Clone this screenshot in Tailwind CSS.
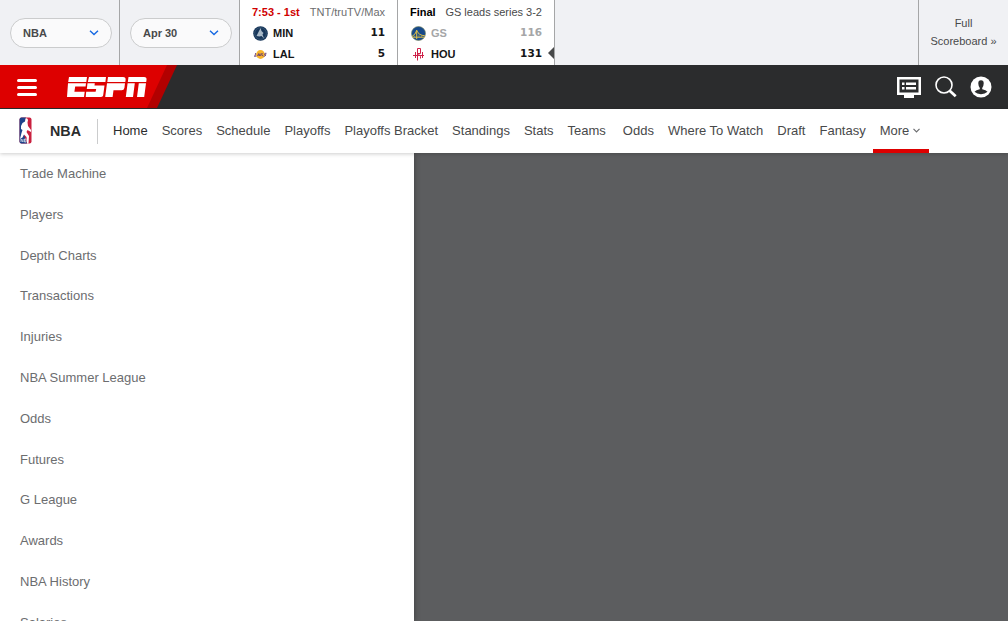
<!DOCTYPE html>
<html lang="en"><head><meta charset="utf-8"><title>NBA on ESPN</title>
<script src="https://cdn.jsdelivr.net/npm/@tailwindcss/browser@4"></script></head>
<body class="w-[1008px] h-[621px] overflow-hidden bg-[#5c5d5f] font-['Liberation_Sans',Arial,sans-serif] text-[13px] flex flex-col">
<section class="h-[65px] shrink-0 flex bg-[#f0f1f4] text-[11px]">
  <div class="w-[120px] border-r border-[#a5a6a7] pl-[10px] pt-[18px]">
    <button class="w-[102px] h-[30px] rounded-full border border-[#cbcccd] bg-[#fafafb] flex items-center justify-between pl-3 pr-3 font-bold text-[#48494a]">NBA<svg class="-mt-px" width="10" height="6" viewBox="0 0 10 6" fill="none" stroke="#1769e2" stroke-width="1.4"><path d="M1 .8 5 4.6 9 .8"/></svg></button>
  </div>
  <div class="w-[120px] border-r border-[#a5a6a7] pl-[10px] pt-[18px]">
    <button class="w-[102px] h-[30px] rounded-full border border-[#cbcccd] bg-[#fafafb] flex items-center justify-between pl-3 pr-3 font-bold text-[#48494a]">Apr 30<svg class="-mt-px" width="10" height="6" viewBox="0 0 10 6" fill="none" stroke="#1769e2" stroke-width="1.4"><path d="M1 .8 5 4.6 9 .8"/></svg></button>
  </div>
  <div class="w-[158px] bg-white border-r border-[#a5a6a7] pl-3 pr-3 pt-[2px]">
    <div class="h-[21px] flex items-center justify-between"><b class="text-[#d00000]">7:53 - 1st</b><span class="text-[#6c6d6f]">TNT/truTV/Max</span></div>
    <div class="h-[21px] flex items-center font-bold text-[#151617]">
      <svg class="ml-px mr-[5px]" width="15" height="15" viewBox="0 0 15 15"><circle cx="7.500" cy="7.500" r="7.300" fill="#17365a"/><circle cx="7.500" cy="7.500" r="5.800" fill="none" stroke="#466680" stroke-width=".6"/><path d="M3.500 10 5.500 6 7.600 2 8.500 5l2 2-1 1.500 1.500 4-2.500-2.500-2 .5z" fill="#a9bac8"/></svg>MIN<span class="ml-auto pb-[2px] text-[10.500px] font-['DejaVu_Sans',sans-serif]">11</span></div>
    <div class="h-[21px] flex items-center font-bold text-[#151617]">
      <svg class="ml-px mr-[5px]" width="15" height="15" viewBox="0 0 15 15"><circle cx="7.500" cy="7.500" r="4.400" fill="#f7b52b"/><path d="M1 9.200h2.500M2.700 6 2 9M4.500 9l1.300-2.500L6.600 9M5 8h2M8.300 6 7.500 9M10.200 6.300 8.500 7.700 10 9M13.500 6.300H12l-.5 1.200 1.500.3-1 1.300h-1.500" stroke="#673c75" fill="none" stroke-width=".9"/></svg>LAL<span class="ml-auto pb-[2px] text-[10.500px] font-['DejaVu_Sans',sans-serif]">5</span></div>
  </div>
  <div class="relative w-[157px] bg-white border-r border-[#a5a6a7] pl-3 pr-3 pt-[2px]">
    <div class="h-[21px] flex items-center justify-between"><b class="text-black">Final</b><span class="text-[#48494a]">GS leads series 3-2</span></div>
    <div class="h-[21px] flex items-center font-bold text-[#a5a6a7]">
      <svg class="ml-px mr-[5px]" width="15" height="15" viewBox="0 0 15 15"><circle cx="7.500" cy="7.500" r="7" fill="#174a8b" stroke="#78875b" stroke-width=".6"/><path d="M1 10.500Q4.500 8.500 5.700 4.500 7.800 9.500 13.800 9.700M1.500 11.200h12M5.700 4v9" stroke="#dfbf47" stroke-width="1" fill="none"/><path d="M3.500 9.500v1.500M8 8.500v2.500M10.500 9.500v1.500" stroke="#b9a94d" stroke-width=".6"/></svg>GS<span class="ml-auto pb-[2px] text-[10.500px] font-['DejaVu_Sans',sans-serif]">116</span></div>
    <div class="h-[21px] flex items-center font-bold text-[#151617]">
      <svg class="ml-px mr-[5px] -mt-px" width="15" height="15" viewBox="0 0 15 15" fill="none" stroke="#ce2148"><path d="M6.500 13.500v-12h3v5h-2.500l2.500 3v2M4.500 5v6M2 8.500h11M11.500 5v6" stroke-width="1"/></svg>HOU<span class="ml-auto pb-[2px] text-[10.500px] font-['DejaVu_Sans',sans-serif]">131</span></div>
    <svg class="absolute right-0 top-[47px]" width="6" height="12" viewBox="0 0 6 12"><path d="M6 0 0 6l6 6z" fill="#48494a"/></svg>
  </div>
  <div class="ml-auto w-[90px] border-l border-[#a5a6a7] pt-[14px] text-center leading-[18px] text-[#48494a]">Full<br>Scoreboard »</div>
</section>
<header class="h-11 shrink-0 bg-[#2b2c2d] flex items-start">
  <div class="relative w-[180px] h-[43px] flex items-center">
    <svg class="absolute inset-0" width="180" height="43" viewBox="0 0 180 43"><path d="M0 0h177l-20 43H0z" fill="#b20000"/><path d="M0 0h167l-20 43H0z" fill="#d00"/></svg>
    <svg class="absolute left-[17px] top-[14px]" width="20" height="17" viewBox="0 0 20 17" stroke="#fff" stroke-width="3" stroke-linecap="round"><path d="M1.500 1.500h17M1.500 8.500h17M1.500 15.500h17"/></svg>
    <svg class="absolute left-[67px] top-[12px]" width="80" height="20" viewBox="0 0 80 20" fill="#fff"><path d="M2 0h18l-.7 5H1.200zM1 6.300h18l-.4 3.200H8.200l-.8 5.300h10.300L17 20H0zM22 0h17l-.6 5H20.800zM20.500 6.300h7.300l-.3 2.200h10l-1.300 9.700Q36 20 34 20H18.700l.5-5.200h9.400l.6-2.800h-9.400zM41 0h15q3 0 2.600 3l-.3 2H40.300zM40 6.300h18l-.6 4.700q-.4 2.300-2.800 2.300h-8.100l-.9 6.700h-7.400zM61.500 0H77q3 0 2.500 3l-.3 2H60.800zM60.600 6.300h7.200L66 20h-7.200zM71.800 6.300H79L77.200 20H70z"/></svg>
  </div>
  <div class="ml-auto h-[43px] flex items-center pr-4">
    <svg class="mt-px" width="24" height="21" viewBox="0 0 24 21"><path d="M0 0h24v18h-7v3H7v-3H0z" fill="#fff"/><path d="M2.500 2.500h19v13h-19z" fill="#2b2c2d"/><path d="M5 5.500h2.500V8H5zM9 5.500h10V8H9zM5 10h2.500v2.500H5zM9 10h10v2.500H9z" fill="#fff"/></svg>
    <svg class="ml-[14px] mt-px" width="22" height="22" viewBox="0 0 22 22" fill="none" stroke="#fff"><circle cx="9" cy="9" r="8" stroke-width="1.600"/><path d="m14.700 14.700 6 5.500" stroke-width="2.800"/></svg>
    <svg class="ml-[13px] mt-px" width="22" height="22" viewBox="0 0 22 22"><circle cx="11" cy="11" r="10.500" fill="#fff"/><path d="M11 4.200q2.800 0 2.700 3.300-.1 2.900-1.500 4.400v1.300q3.800.7 5.300 2.600Q15 18.200 11 18.200t-6.500-2.400q1.500-1.900 5.300-2.600v-1.300Q8.400 10.400 8.300 7.500 8.200 4.200 11 4.200z" fill="#2b2c2d"/></svg>
  </div>
</header>
<nav class="relative z-10 h-11 shrink-0 bg-white shadow-[0_1px_4px_rgba(0,0,0,.2)] flex items-center text-[#48494a] whitespace-nowrap">
  <svg class="ml-[19px] -mt-px" width="13" height="27" viewBox="0 0 13 27"><rect x=".5" y=".5" width="12" height="26" rx="2" fill="#c9203f"/><path d="M2.500.5H7L5 9v9l3 8.500H2.500q-2 0-2-2v-22q0-2 2-2z" fill="#1d428a"/><path d="M6.500 1.500Q8.500.5 9 3L8.500 5.500 9 9l3 4v2l-3.500-2-1 2L10 19l-.5 7.500H8L7.500 20 5 17.500l-1.500 3L1 22l1.500-6 1-3L2 12V9l1.500-3L6 4.500z" fill="#fff"/><path d="M2 25v-3L4 25v-3M5.500 25v-3h1.500v3z" stroke="#d6dfeb" stroke-width=".8" fill="none"/></svg>
  <b class="ml-[18px] mt-[2px] w-[31px] text-[14.300px] text-[#2b2c2d]">NBA</b>
  <div class="ml-4 h-[25px] w-px bg-[#cbcccd]"></div>
  <div class="ml-[15px] h-11 flex items-center gap-[14px]"><span class="text-[#2b2c2d]">Home</span><span>Scores</span><span>Schedule</span><span>Playoffs</span><span>Playoffs Bracket</span><span>Standings</span><span>Stats</span><span>Teams</span><span class="ml-[3px]">Odds</span><span>Where To Watch</span><span>Draft</span><span>Fantasy</span>
  <span class="-ml-[7px] mt-[1px] pl-[7px] pr-[9px] h-[43px] border-b-4 border-[#d00] pt-[2px] flex items-center gap-1">More<svg width="7" height="5" viewBox="0 0 7 5" fill="none" stroke="#6c6d6f" stroke-width="1.200"><path d="M.5.800 3.500 3.800 6.500.800"/></svg></span></div>
</nav>
<aside class="w-[414px] h-[468px] overflow-hidden bg-white shadow-[0_0_6px_rgba(0,0,0,.35)] text-[#6c6d6f]">
  <ul class="pl-5 pt-px leading-[40.800px]"><li>Trade Machine</li><li>Players</li><li>Depth Charts</li><li>Transactions</li><li>Injuries</li><li>NBA Summer League</li><li>Odds</li><li>Futures</li><li>G League</li><li>Awards</li><li>NBA History</li><li>Salaries</li></ul>
</aside>
</body></html>
